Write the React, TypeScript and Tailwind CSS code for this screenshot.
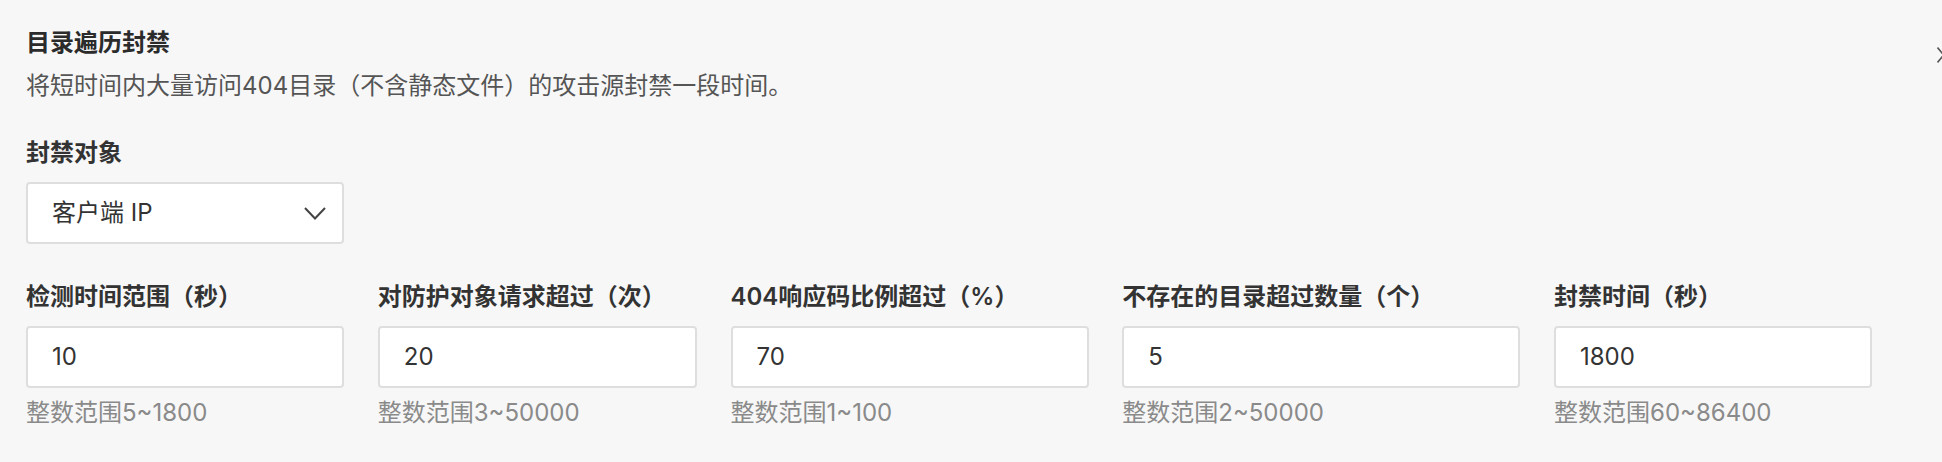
import React from 'react';

type Field = {
    label: string;
    value: string;
    hint: string;
    width: string;
};

const fields: Field[] = [
    { label: '检测时间范围（秒）', value: '10', hint: '整数范围5~1800', width: 'w-[318px]' },
    { label: '对防护对象请求超过（次）', value: '20', hint: '整数范围3~50000', width: 'w-[319px]' },
    { label: '404响应码比例超过（%）', value: '70', hint: '整数范围1~100', width: 'w-[358px]' },
    { label: '不存在的目录超过数量（个）', value: '5', hint: '整数范围2~50000', width: 'w-[398px]' },
    { label: '封禁时间（秒）', value: '1800', hint: '整数范围60~86400', width: 'w-[318px]' },
];

const fontStack = "font-['Inter','Noto_Sans_CJK_SC',sans-serif]";

export default function App() {
    return (
        <div className={`relative w-[1942px] h-[462px] overflow-hidden bg-[#f7f7f7] pl-[26px] pt-[27px] text-[24px] leading-[32px] ${fontStack}`}>
            {/* close button, cut off at the right edge */}
            <svg className="absolute left-[1937px] top-[47px]" width="14" height="16" viewBox="0 0 14 16" fill="none">
                <path d="M0.5 0.5 L13 15.5 M0.5 15.5 L13 0.5" stroke="#555" strokeWidth="1.6" />
            </svg>

            <h2 className="font-bold text-[#2b2b2b]">目录遍历封禁</h2>
            <p className="mt-[11px] text-[#555]">将短时间内大量访问404目录（不含静态文件）的攻击源封禁一段时间。</p>

            <div className="mt-[35px] font-semibold text-[#333]">封禁对象</div>
            <div className="mt-[13px] flex h-[62px] w-[318px] items-center justify-between rounded-[4px] border-2 border-[#dedede] bg-white pl-[24px] pr-[16px] text-[#333]">
                <span>客户端 IP</span>
                <svg width="22" height="13" viewBox="0 0 22 13" fill="none">
                    <path d="M1 1 L11 11.5 L21 1" stroke="#444" strokeWidth="2" />
                </svg>
            </div>

            <div className="mt-[37px] flex gap-[33.75px]">
                {fields.map((f) => (
                    <div key={f.label} className={f.width}>
                        <div className="font-semibold whitespace-nowrap text-[#333]">{f.label}</div>
                        <div className="mt-[13px] flex h-[62px] items-center rounded-[4px] border-2 border-[#dedede] bg-white pl-[24px] text-[#333]">
                            {f.value}
                        </div>
                        <div className="mt-[9px] text-[#8a8a8a]">{f.hint}</div>
                    </div>
                ))}
            </div>
        </div>
    );
}
